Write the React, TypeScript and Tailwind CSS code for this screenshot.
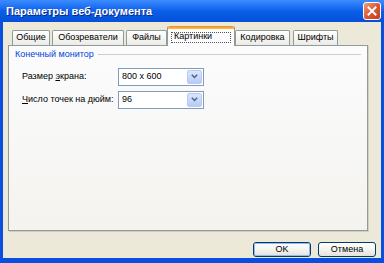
import React from 'react';

// Tabs of the "web document options" dialog, left to right
const tabs = [
  { label: 'Общие', w: 'w-[38px]', ml: 'ml-[2px]' },
  { label: 'Обозреватели', w: 'w-[72px]', ml: 'ml-[2px]' },
  { label: 'Файлы', w: 'w-[41px]', ml: 'ml-[2px]' },
  { label: 'Картинки', w: 'w-[68px]', ml: 'ml-0', active: true },
  { label: 'Кодировка', w: 'w-[55px]', ml: 'ml-0' },
  { label: 'Шрифты', w: 'w-[45px]', ml: 'ml-[3px]' },
];

const Combo: React.FC<{ value: string }> = ({ value }) => (
  <div className="flex h-[18px] w-[86px] items-stretch border border-[#7f9db9] bg-white p-px">
    <div className="flex flex-1 items-center pl-[2px] text-[9px] text-black">{value}</div>
    <div className="flex w-[15px] items-center justify-center rounded-[2px] border border-[#b9c9ef] bg-gradient-to-b from-[#dbe6fd] to-[#b7cbf6]">
      <svg width="7" height="5" viewBox="0 0 7 5">
        <path d="M0.8 0.8 L3.5 3.5 L6.2 0.8" fill="none" stroke="#4d6185" strokeWidth="1.5" />
      </svg>
    </div>
  </div>
);

const XPButton: React.FC<{ label: string; def?: boolean }> = ({ label, def }) => (
  <div className="flex h-[15px] w-[58px] items-center justify-center rounded-[3px] border border-[#003c74] bg-gradient-to-b from-[#ffffff] via-[#f4f4f0] to-[#e3e2da] text-[9px] text-black">
    <div
      className={
        def
          ? 'flex h-full w-full items-center justify-center rounded-[2px] border border-[#98b8ea]'
          : 'flex h-full w-full items-center justify-center'
      }
    >
      {label}
    </div>
  </div>
);

export default function App() {
  return (
    <div
      className="flex h-[263px] w-[384px] flex-col overflow-hidden bg-[#0a4ee0]"
      style={{ fontFamily: '"Liberation Sans", Arial, sans-serif' }}
    >
      {/* Title bar */}
      <div className="flex h-[22px] shrink-0 items-center justify-between bg-gradient-to-b from-[#3b8cff] via-[#0a5fea] to-[#0550d8] pl-[6px] pr-[3px]">
        <span className="text-[11px] font-bold text-white [text-shadow:1px_1px_0_#0a2a8a]">
          Параметры веб-документа
        </span>
        <div className="flex h-[18px] w-[18px] items-center justify-center rounded-[3px] border border-white bg-gradient-to-br from-[#ef9a78] via-[#dc5a32] to-[#c0401c]">
          <svg width="10" height="10" viewBox="0 0 10 10">
            <path d="M1.5 1.5 L8.5 8.5 M8.5 1.5 L1.5 8.5" stroke="white" strokeWidth="2" strokeLinecap="square" />
          </svg>
        </div>
      </div>

      {/* Body */}
      <div className="mx-[3px] mb-[5px] flex flex-1 flex-col bg-[#ece9d8] pl-[5px] pr-[13px] pt-[4px]">
        {/* Tab strip */}
        <div className="flex h-[19px] items-end pl-[2px]">
          {tabs.map((t) =>
            t.active ? (
              <div
                key={t.label}
                className={`relative z-10 -mb-px flex h-[20px] ${t.w} ${t.ml} flex-col rounded-t-[2px] border-x border-[#919b9c] bg-[#fcfcfe]`}
              >
                <div className="h-[3px] rounded-t-[2px] bg-gradient-to-b from-[#e68b2c] to-[#ffc73c]" />
                <div className="flex flex-1 items-center px-[3px] pb-[1px]">
                  <div className="flex h-[11px] flex-1 items-center border border-dotted border-[#555] pl-[2px] text-[9px] text-black">
                    {t.label}
                  </div>
                </div>
              </div>
            ) : (
              <div
                key={t.label}
                className={`flex h-[15px] ${t.w} ${t.ml} items-center justify-center rounded-t-[2px] border border-b-0 border-[#919b9c] bg-gradient-to-b from-[#ffffff] to-[#ecebe5] text-[9px] text-black`}
              >
                {t.label}
              </div>
            )
          )}
        </div>

        {/* Tab page */}
        <div className="flex h-[186px] flex-col border border-[#919b9c] bg-gradient-to-b from-[#fcfcfe] to-[#f4f3ee] px-[6px] pt-[2px] shadow-[1px_1px_0_#d0cec0]">
          <div className="flex items-center gap-[4px]">
            <span className="text-[9px] text-[#0046d5]">Конечный монитор</span>
            <div className="h-px flex-1 bg-[#d0d0bf]" />
          </div>

          <div className="mt-[6px] flex items-center pl-[7px]">
            <span className="w-[96px] text-[9px] text-black">
              Размер <span className="underline">э</span>крана:
            </span>
            <Combo value="800 x 600" />
          </div>

          <div className="mt-[5px] flex items-center pl-[7px]">
            <span className="w-[96px] text-[9px] text-black">
              <span className="underline">Ч</span>исло точек на дюйм:
            </span>
            <Combo value="96" />
          </div>
        </div>

        {/* Dialog buttons */}
        <div className="-mr-[8px] mt-[11px] flex justify-end gap-[7px]">
          <XPButton label="OK" def />
          <XPButton label="Отмена" />
        </div>
      </div>
    </div>
  );
}
